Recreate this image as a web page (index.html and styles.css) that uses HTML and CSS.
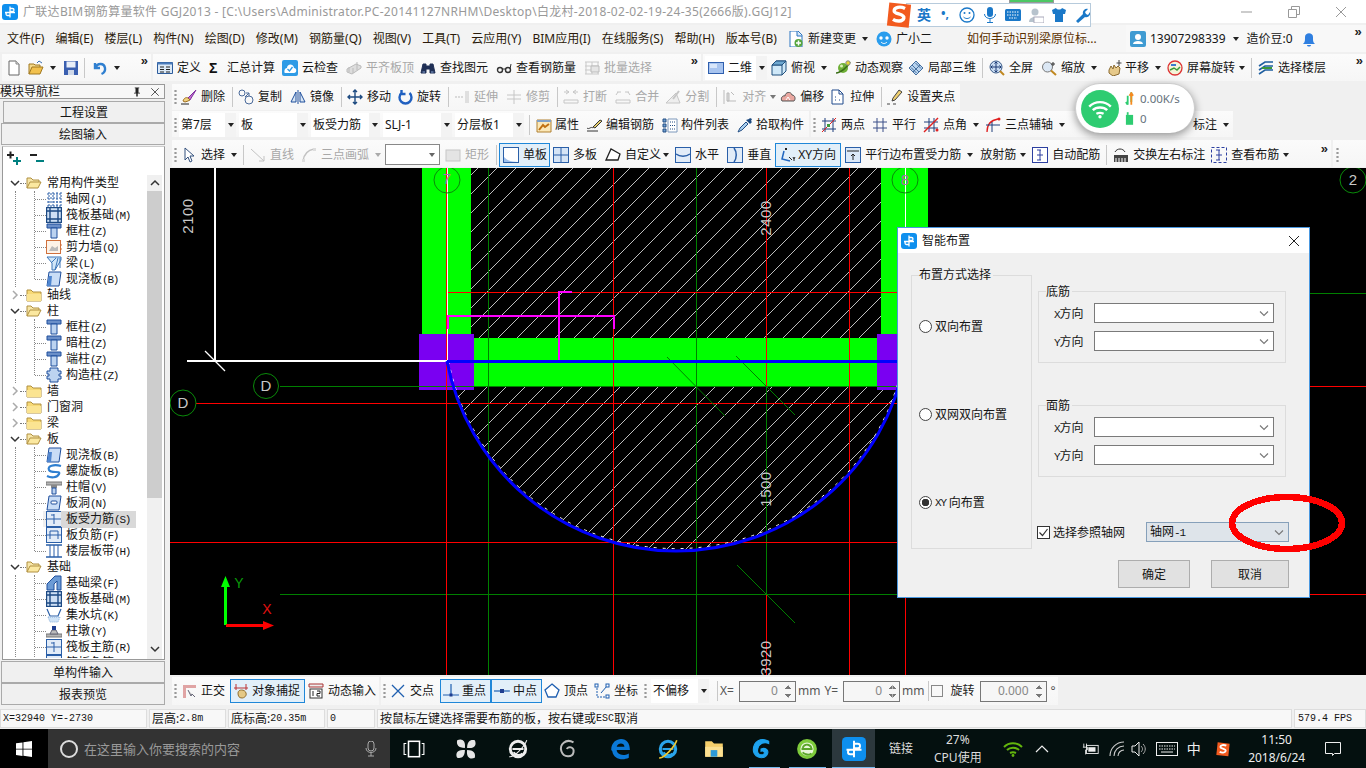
FILE: index.html
```html
<!DOCTYPE html>
<html lang="zh">
<head>
<meta charset="utf-8">
<title>广联达BIM钢筋算量软件</title>
<link rel="stylesheet" href="styles.css">
</head>
<body>
<svg class="defs" aria-hidden="true">
<defs>
<symbol id="app" viewBox="0 0 16 16"><rect width="16" height="16" rx="3" fill="#0e8fee"/><path d="M8 2.500v11M3 8.500h10M8 4.500h2.500a1.500 1.500 0 0 1 0 3H8M8 8.500H5.500a1.500 1.500 0 0 0 0 3H8" fill="none" stroke="#fff" stroke-width="1.300"/></symbol>
<symbol id="doc" viewBox="0 0 16 16"><path d="M3 1h7l3 3v11H3z" fill="#fff" stroke="#666"/><path d="M10 1v3h3" fill="#ddd" stroke="#888"/></symbol>
<symbol id="open" viewBox="0 0 16 16"><path d="M1 14V4h5l1 1h5v2" fill="#f5d98a" stroke="#a07820"/><path d="M1 14l3-7h11l-3 7z" fill="#f2c14e" stroke="#a07820"/><path d="M9 3l2-2 3 2" fill="none" stroke="#3a6fb0"/></symbol>
<symbol id="save" viewBox="0 0 16 16"><path d="M1 1h14v14H1z" fill="#3a5fb0"/><path d="M3.500 1.500h9v6h-9z" fill="#e8eef8"/><path d="M5 10h6v5H5z" fill="#cfd8e8"/></symbol>
<symbol id="undo" viewBox="0 0 16 16"><path d="M3 3v5h5M3.500 8C5 3 12 2.500 13 8c.4 2.500-1 5-3.500 6" fill="none" stroke="#2f7fd0" stroke-width="2.400"/></symbol>
<symbol id="def" viewBox="0 0 16 16"><path d="M.5 2.500h15v11H.5z" fill="#dbe9f7" stroke="#2d5c9c"/><path d="M.5 2.500h15v2H.5z" fill="#4c7dbc"/><path d="M3 7h4M3 9.500h4M3 12h4M9 7h4M9 9.500h4M9 12h4" stroke="#222"/></symbol>
<symbol id="cloud" viewBox="0 0 16 16"><rect width="16" height="16" rx="2" fill="#2e9be6"/><path d="M3 13h9c3 0 3-5 0-5C11 3 5 4 5 8c-3 0-3 5-2 5z" fill="#fff"/><path d="M5.500 9l2 2 3-4" fill="none" stroke="#2e9be6" stroke-width="1.300"/></symbol>
<symbol id="flat" viewBox="0 0 16 16"><path d="M1 9l9-5 5 2v2l-9 6-5-2z" fill="#ddd" stroke="#bbb"/><path d="M3 12V7M7 13V8M11 10V2" stroke="#bbb"/></symbol>
<symbol id="bino" viewBox="0 0 16 16"><path d="M1 13l2-9h3v9zM15 13l-2-9h-3v9zM6 6h4v3H6z" fill="#1f2f55" stroke="#1f2f55"/><path d="M2.500 12h2.500M11 12h2.500" stroke="#8aa8d8"/></symbol>
<symbol id="glass" viewBox="0 0 16 16"><circle cx="4" cy="10" r="2.500" fill="none" stroke="#333" stroke-width="1.400"/><circle cx="12" cy="10" r="2.500" fill="none" stroke="#333" stroke-width="1.400"/><path d="M6 9h4M14 9l1-5" stroke="#333"/></symbol>
<symbol id="batch" viewBox="0 0 16 16"><path d="M1 2h14M1 6h14M1 10h14M1 14h14M2 2v12M8 2v12M14 2v12" stroke="#c9c9c9" fill="none"/><path d="M7 6h8v6H7z" fill="#e5e5e5" stroke="#bbb"/></symbol>
<symbol id="rect2d" viewBox="0 0 16 16"><rect x=".5" y="2.500" width="15" height="11" fill="#a8c4ef" stroke="#2f5fae"/><rect x="2" y="4" width="7" height="4" fill="#d8e6fa"/></symbol>
<symbol id="cube" viewBox="0 0 16 16"><path d="M1 5h10v10H1zM1 5l4-4h10v10l-4 4M11 5l4-4" fill="#cfe8f8" stroke="#1f4f7c"/><path d="M1 5l4-4h10l-4 4z" fill="#6fa8d0" stroke="#1f4f7c"/></symbol>
<symbol id="orbit" viewBox="0 0 16 16"><circle cx="8" cy="8" r="5" fill="#6fb038"/><path d="M1 13C5 13 13 7 15 2" fill="none" stroke="#3b6f18" stroke-width="1.600"/><circle cx="13" cy="3" r="2.200" fill="#e8d830" stroke="#888"/><circle cx="6.500" cy="6" r="1.500" fill="#dcefb8"/></symbol>
<symbol id="local" viewBox="0 0 16 16"><path d="M1 8l7-7 7 7-7 7z" fill="#b9d4ef" stroke="#456f9f"/><path d="M4 5l7 7M12 5L5 12M7.500 3L13 8.500M3 7.500L8.500 13" stroke="#456f9f" fill="none"/></symbol>
<symbol id="fit" viewBox="0 0 16 16"><circle cx="7" cy="7" r="6" fill="#c9dcf2" stroke="#3a5a88"/><path d="M7 2v10M2 7h10M5.500 3.500L7 2l1.500 1.500M5.500 10.500L7 12l1.500-1.500M3.500 5.500L2 7l1.500 1.500M10.500 5.500L12 7l-1.500 1.500" fill="none" stroke="#1d3b75"/><path d="M11 11l4 4" stroke="#c08820" stroke-width="2"/></symbol>
<symbol id="zoom" viewBox="0 0 16 16"><circle cx="6.500" cy="7" r="5" fill="#dbe7f4" stroke="#777"/><path d="M10 10.500l5 4.500" stroke="#c08820" stroke-width="2"/><path d="M12 2v4M10 4h4" stroke="#333"/></symbol>
<symbol id="pan" viewBox="0 0 16 16"><path d="M2 10l2-4 2 3 1-4 2 3 2-2 2 2-1 6-6 2-4-3z" fill="#e6c98a" stroke="#8a6a30"/><path d="M12 0v6M9.500 3h5" stroke="#444"/></symbol>
<symbol id="srot" viewBox="0 0 16 16"><circle cx="8" cy="8" r="7" fill="#f4f4d8" stroke="#d33" stroke-width="1.300"/><path d="M3 10l4-2 3 2 3-3" stroke="#3a9a3a" stroke-width="1.500" fill="none"/><path d="M4 5h5" stroke="#3a7ad0" stroke-width="2"/></symbol>
<symbol id="layer" viewBox="0 0 16 16"><path d="M1 6l6-4h8M1 10l6-4h8M1 14l6-4h8" fill="none" stroke="#1f5fa0" stroke-width="1.600"/><path d="M4 8h10" stroke="#3a9a3a" stroke-width="2"/></symbol>
<symbol id="del" viewBox="0 0 16 16"><path d="M15 1L7 9l2 2z" fill="#c070d0" stroke="#8030a0"/><path d="M7 9c-2-1-4 0-5 3l2 1 3-1 2-1z" fill="#f0d080" stroke="#a07020"/><path d="M0 15h8" stroke="#222"/></symbol>
<symbol id="copy" viewBox="0 0 16 16"><circle cx="4" cy="4" r="3" fill="none" stroke="#4a6a9a"/><circle cx="11" cy="11" r="4" fill="none" stroke="#4a6a9a"/><path d="M7 8l4-4M8 4h3v3" fill="none" stroke="#4a6a9a"/></symbol>
<symbol id="mirror" viewBox="0 0 16 16"><path d="M6 3v10H1zM10 3v10h5z" fill="#dbe7f4" stroke="#1f4f9c"/><path d="M8 1v14" stroke="#1f4f9c"/></symbol>
<symbol id="move" viewBox="0 0 16 16"><path d="M8 1v14M1 8h14M6 3l2-2 2 2M6 13l2 2 2-2M3 6L1 8l2 2M13 6l2 2-2 2" fill="none" stroke="#1d4a80" stroke-width="1.400"/></symbol>
<symbol id="rotate" viewBox="0 0 16 16"><path d="M12.500 4a6 6 0 1 1-8 0M4.500 1v4h4" fill="none" stroke="#2060c0" stroke-width="2.400"/></symbol>
<symbol id="extend" viewBox="0 0 16 16"><path d="M1 8h9" stroke="#bbb" stroke-dasharray="2 1"/><path d="M12 2v12M14 2v12" stroke="#c6c6c6"/></symbol>
<symbol id="trim" viewBox="0 0 16 16"><path d="M1 6h14M1 10h14M8 1v14" stroke="#c6c6c6"/></symbol>
<symbol id="brk" viewBox="0 0 16 16"><path d="M1 3h5M10 3h5M3 1l3 2-3 2M13 1l-3 2 3 2M1 11h14v3H1z" fill="none" stroke="#c6c6c6"/></symbol>
<symbol id="merge" viewBox="0 0 16 16"><path d="M2 3h4M10 3h4M1 6l2-3M15 6l-2-3M1 11h14v3H1z" fill="none" stroke="#c6c6c6"/></symbol>
<symbol id="split" viewBox="0 0 16 16"><path d="M1 14h14L11 4 1 14z" fill="#eee" stroke="#c6c6c6"/><path d="M8 10l6-8" stroke="#c6c6c6" stroke-width="2"/></symbol>
<symbol id="align" viewBox="0 0 16 16"><path d="M2 1v14M5 12h9M5 4h2v8H5z" fill="#ddd" stroke="#bbb"/><path d="M9 3l3 3" stroke="#bbb"/></symbol>
<symbol id="offs" viewBox="0 0 16 16"><path d="M2 12c-2-3 1-6 3-5 0-4 6-5 7-1 3 0 4 4 2 6z" fill="#e9a7a0" stroke="#555"/><path d="M6 11l2-3 2 3" fill="none" stroke="#fff"/></symbol>
<symbol id="strch" viewBox="0 0 16 16"><path d="M2 1h7l4 4v10H2z" fill="#fff" stroke="#214a8c"/><path d="M9 1v4h4" fill="none" stroke="#214a8c"/><path d="M5 8h1M5 11h1M9 11h1" stroke="#214a8c"/></symbol>
<symbol id="grip" viewBox="0 0 16 16"><path d="M0 15h3M6 15h3M12 1L6 9l-1 3 3-1 7-8z" fill="#f0d070" stroke="#444"/></symbol>
<symbol id="prop" viewBox="0 0 16 16"><path d="M1 3h14v12H1z" fill="#fbe8b8" stroke="#b08030"/><path d="M1 3h14v2H1z" fill="#7fa0c8"/><path d="M3 13l4-5 2 2 4-3" stroke="#c07010" fill="none" stroke-width="2"/></symbol>
<symbol id="edit" viewBox="0 0 16 16"><path d="M6 10l7-7 2 1-7 7z" fill="#e8d070" stroke="#333"/><path d="M0 11c2 2 4-2 6 0M0 14h11" fill="none" stroke="#333"/></symbol>
<symbol id="list" viewBox="0 0 16 16"><path d="M1 2h3v3H1zM1 7h3v3H1zM1 12h3v3H1z" fill="#6f9fd0" stroke="#244e84"/><path d="M6 2h9v13H6z" fill="#fff" stroke="#7d98bb"/><path d="M8 5h5M8 8.500h5M8 12h5" stroke="#244e84" stroke-dasharray="1 1"/></symbol>
<symbol id="pick" viewBox="0 0 16 16"><path d="M1 15l2-4 6-6 2 2-6 6z" fill="#a9d0f0" stroke="#244e84"/><path d="M9 3l4 4 2-2-1-1 1-2-2-1-1 1z" fill="#1d4a80"/></symbol>
<symbol id="two" viewBox="0 0 16 16"><path d="M1 4h14M1 12h14M4 1v14M12 1v14" stroke="#1f3f7c"/><path d="M1 15L15 1" stroke="#e02020"/><rect x="6" y="7" width="3" height="3" fill="#3a9a3a"/></symbol>
<symbol id="par" viewBox="0 0 16 16"><path d="M1 5h14M1 11h14M5 1v14M11 1v14" stroke="#3a4f88"/></symbol>
<symbol id="ang" viewBox="0 0 16 16"><path d="M1 5h14M1 11h14M6 1v14M11 1v14" stroke="#1f3f7c"/><path d="M1 15L15 1" stroke="#e02020" stroke-width="1.400"/><circle cx="14" cy="13" r="1.500" fill="#e02020"/></symbol>
<symbol id="arc3" viewBox="0 0 16 16"><path d="M2 15C2 7 7 3 13 2" fill="none" stroke="#e02020" stroke-width="1.300"/><path d="M1 8h14M7 5v10" stroke="#1f3f7c"/><circle cx="14" cy="2" r="1.500" fill="#e02020"/></symbol>
<symbol id="sel" viewBox="0 0 16 16"><path d="M4 1v12l3-3 2 5 2-1-2-5h4z" fill="#fff" stroke="#33507c"/></symbol>
<symbol id="lineg" viewBox="0 0 16 16"><path d="M1 2l13 12M14 9v5H9" fill="none" stroke="#c2c2c2"/></symbol>
<symbol id="arcg" viewBox="0 0 16 16"><path d="M2 14C3 7 7 3 13 2" fill="none" stroke="#c2c2c2" stroke-width="1.400"/><rect x="1" y="12" width="3" height="3" fill="#ddd"/><rect x="12" y="1" width="3" height="3" fill="#ddd"/></symbol>
<symbol id="rectg" viewBox="0 0 16 16"><rect x="1" y="3" width="14" height="11" fill="#e4e4e4" stroke="#c6c6c6"/></symbol>
<symbol id="single" viewBox="0 0 16 16"><rect x=".5" y=".5" width="15" height="15" fill="#fff" stroke="#2a5fa8"/><path d="M1 15V10c4 4 8 5 14 5z" fill="#9fc0ec"/></symbol>
<symbol id="multi" viewBox="0 0 16 16"><rect x=".5" y=".5" width="15" height="15" fill="#d5e4f6" stroke="#2a5fa8"/><path d="M8 0v16M0 8h16" stroke="#2a5fa8"/></symbol>
<symbol id="cust" viewBox="0 0 16 16"><path d="M1 13L6 2l9 5-2 6z" fill="#fff" stroke="#222" stroke-width="1.300"/></symbol>
<symbol id="hor" viewBox="0 0 16 16"><rect x=".5" y=".5" width="15" height="15" fill="#e2ecf8" stroke="#2a5fa8"/><path d="M1 7c4 3 10 3 14 0" fill="none" stroke="#2a5fa8" stroke-width="1.500"/></symbol>
<symbol id="ver" viewBox="0 0 16 16"><rect x=".5" y=".5" width="15" height="15" fill="#e2ecf8" stroke="#2a5fa8"/><path d="M7 1c3 4 3 10 0 14" fill="none" stroke="#2a5fa8" stroke-width="1.500"/></symbol>
<symbol id="xy" viewBox="0 0 16 16"><path d="M4 4l-2 8 8 2" fill="none" stroke="#1f66c0" stroke-width="1.500"/><path d="M9 10l3 3M5 1l2 2M7 1L5 3M13 10l1 2 1-2M14 12v2" stroke="#222" fill="none"/></symbol>
<symbol id="parl" viewBox="0 0 16 16"><rect x=".5" y=".5" width="15" height="15" fill="#dce9f8" stroke="#2a5fa8"/><path d="M2 4h12M8 7v6M6 9l2-2 2 2" stroke="#222" fill="none"/></symbol>
<symbol id="auto" viewBox="0 0 16 16"><rect x=".5" y=".5" width="15" height="15" fill="#fff" stroke="#2c3fa0"/><path d="M5 3h4M8 3v10M5 13h4M5 8h6" stroke="#2c3fa0"/></symbol>
<symbol id="swap" viewBox="0 0 16 16"><path d="M1 8h14v7H1z" fill="#444"/><path d="M3 11v4M6 11v4M9 11v4M12 11v4" stroke="#fff"/><path d="M2 5c2-4 8-4 10 0" fill="none" stroke="#333"/></symbol>
<symbol id="view" viewBox="0 0 16 16"><rect x=".5" y=".5" width="15" height="15" fill="none" stroke="#2c3fa0" stroke-dasharray="3 2"/><path d="M5 3h4M8 3v10M5 13h4M5 8h6" stroke="#2c3fa0"/></symbol>
<symbol id="ortho" viewBox="0 0 16 16"><path d="M2 15V2h13v3H5v10z" fill="#e0a4a4"/><path d="M7 7l3 6 1-2 3 3" fill="#ccc" stroke="#667"/></symbol>
<symbol id="snap" viewBox="0 0 16 16"><path d="M3 1v6M13 1v6M1 5h14" stroke="#b33" fill="none"/><path d="M5 10c0-4 7-4 8 0 1 3-2 5-4 5-3 0-4-2-4-5z" fill="#e5c985" stroke="#927030"/></symbol>
<symbol id="dyn" viewBox="0 0 16 16"><path d="M1 1h14v3H1z" fill="#eee" stroke="#a33"/><rect x="2" y="6" width="12" height="9" fill="#fff" stroke="#333"/><path d="M5 8v5M9 8h3v2.500H9V13h3" stroke="#222" fill="none"/></symbol>
<symbol id="cross" viewBox="0 0 16 16"><path d="M2 2l12 12M14 2L2 14" stroke="#1f5fb0" stroke-width="1.300"/></symbol>
<symbol id="perp" viewBox="0 0 16 16"><path d="M8 1v11M0 12h16" stroke="#1f5fb0" stroke-width="1.200"/><rect x="6.500" y="10.500" width="3" height="3" fill="#1f3f90"/></symbol>
<symbol id="mid" viewBox="0 0 16 16"><path d="M0 8h16" stroke="#1f5fb0" stroke-width="1.200"/><rect x="6" y="6" width="4" height="4" fill="#1f3f90"/></symbol>
<symbol id="vert" viewBox="0 0 16 16"><path d="M8 1l7 6-3 7H4L1 7z" fill="#fff" stroke="#1f5fb0" stroke-width="1.300"/></symbol>
<symbol id="coord" viewBox="0 0 16 16"><path d="M3 2v12h10" fill="none" stroke="#1f5fb0" stroke-dasharray="2 1"/><path d="M13 3L7 10" stroke="#1f5fb0"/><rect x="1" y="1" width="3" height="3" fill="#fff" stroke="#1f5fb0"/><rect x="12" y="1" width="3" height="3" fill="#fff" stroke="#1f5fb0"/><rect x="12" y="12" width="3" height="3" fill="#fff" stroke="#1f5fb0"/></symbol>
<symbol id="newchg" viewBox="0 0 16 16"><path d="M2 0h8l4 4v12H2z" fill="#fff" stroke="#2a74c0"/><path d="M9 0v5h5" fill="#cfe3f7" stroke="#2a74c0"/><circle cx="10.500" cy="12" r="4" fill="#55a53c"/><path d="M10.500 9.500v5M8 12h5" stroke="#fff" stroke-width="1.500"/></symbol>
<symbol id="xiao" viewBox="0 0 16 16"><circle cx="8" cy="8" r="7.500" fill="#2a9ded"/><circle cx="5" cy="7" r="1.700" fill="#fff"/><circle cx="11" cy="7" r="1.700" fill="#fff"/><path d="M5 11c2 2 4 2 6 0" stroke="#fff" fill="none"/></symbol>
<symbol id="user" viewBox="0 0 16 16"><rect width="16" height="16" rx="2" fill="#3f9bd2"/><circle cx="8" cy="6" r="3" fill="#fff"/><path d="M3 13c0-4 10-4 10 0z" fill="#fff"/></symbol>
<symbol id="bell" viewBox="0 0 16 16"><path d="M2 13c2-2 2-3 2-7 0-5 8-5 8 0 0 4 0 5 2 7z" fill="#2f7fe0"/><path d="M6 14c0 2 4 2 4 0z" fill="#2f7fe0"/></symbol>
<symbol id="pin" viewBox="0 0 16 16"><path d="M5 2h6v1h-1v6h2v1H9v4H7v-4H4V9h2V3H5z" fill="#222"/></symbol>
<symbol id="x" viewBox="0 0 16 16"><path d="M3 3l10 10M13 3L3 13" stroke="#222" fill="none"/></symbol>
<symbol id="pp" viewBox="0 0 16 16"><path d="M1 5h7M4.500 1.500v7" stroke="#222" stroke-width="2"/><path d="M7 11h8M11 7v8" stroke="#008080" stroke-width="2"/></symbol>
<symbol id="mm" viewBox="0 0 16 16"><path d="M1 5h7" stroke="#222" stroke-width="2"/><path d="M7 11h8" stroke="#008080" stroke-width="2"/></symbol>
<symbol id="down" viewBox="0 0 10 10"><path d="M1 3l4 4 4-4" fill="none" stroke="#333" stroke-width="1.500"/></symbol>
<symbol id="dropc" viewBox="0 0 10 10"><path d="M1 3.500l4 4 4-4" fill="none" stroke="#777" stroke-width="1.100"/></symbol>
<symbol id="right" viewBox="0 0 10 10"><path d="M3 1l4 4-4 4" fill="none" stroke="#aaa" stroke-width="1.500"/></symbol>
<symbol id="up" viewBox="0 0 10 10"><path d="M1 7l4-4 4 4" fill="none" stroke="#333" stroke-width="1.500"/></symbol>
<symbol id="fo" viewBox="0 0 16 16"><path d="M1 13V3h4l2 2h6v3" fill="#f7e6a8" stroke="#b09040"/><path d="M1 13l3-6h11l-3 6z" fill="#fbe8a0" stroke="#b09040"/></symbol>
<symbol id="fc" viewBox="0 0 16 16"><path d="M1 14V3h4l2 2h8v9z" fill="#f7d976" stroke="#b09040"/><path d="M1 7h14v7H1z" fill="#fbe492"/></symbol>
<symbol id="tgrid" viewBox="0 0 16 16"><path d="M1 3h14M1 7h14M1 11h14M1 15h14M3 1v14M7 1v14M11 1v14M15 1v14" stroke="#2a5fa8" stroke-dasharray="2 1"/></symbol>
<symbol id="traft" viewBox="0 0 16 16"><rect x=".5" y=".5" width="15" height="15" fill="#cfe0f5" stroke="#1d4a84" stroke-width="1.400"/><path d="M4 1v14M12 1v14M1 4h14M1 12h14" stroke="#1d4a84" stroke-width="1.400"/></symbol>
<symbol id="tcol" viewBox="0 0 16 16"><path d="M1 1h14v4H1z" fill="#6b8fc8" stroke="#1f4f9c"/><path d="M5 5h6v10H5z" fill="#bcd3f0" stroke="#1f4f9c"/></symbol>
<symbol id="tpuz" viewBox="0 0 16 16"><path d="M4 1h8v3h3v3h-2v2h2v3h-3v3H4v-3H1v-3h2V7H1V4h3z" fill="#bcd3f0" stroke="#1f4f9c"/></symbol>
<symbol id="twall" viewBox="0 0 16 16"><rect x=".5" y="1.500" width="14" height="13" fill="#fdf3e8" stroke="#d0703c"/><path d="M3 12l3-5 3 2 3-2v5z" fill="#bbb"/><path d="M15 5v2M15 9v2" stroke="#d0703c"/></symbol>
<symbol id="tbeam" viewBox="0 0 16 16"><path d="M1 2h14v3L9 15H6V8z" fill="#d0e6f8" stroke="#3c76b8"/><path d="M10 3l-5 5M12 3l-3 12M14 3v10" stroke="#3c76b8"/></symbol>
<symbol id="tslab" viewBox="0 0 16 16"><path d="M3 1h12l-2 14H1z" fill="#c9ddf6" stroke="#1f4f9c"/><path d="M1 15l2-10h3l-1 10z" fill="#4f86d0"/></symbol>
<symbol id="tspiral" viewBox="0 0 16 16"><path d="M15 3C8 1 1 3 3 7s12 0 10 4-8 4-12 2" fill="none" stroke="#2f7fd0" stroke-width="2.200"/></symbol>
<symbol id="tcap" viewBox="0 0 16 16"><path d="M0 3h16v3H0z" fill="#b5b5b5" stroke="#777"/><path d="M5 6h6v3H5z" fill="#888"/><path d="M6 9h4v6H6z" fill="#bcd3f0" stroke="#1f4f9c"/></symbol>
<symbol id="thole" viewBox="0 0 16 16"><path d="M3 1h12l-2 14H1z" fill="#c9ddf6" stroke="#1f4f9c"/><rect x="5" y="6" width="6" height="3" rx="1" fill="#fff" stroke="#1f4f9c"/></symbol>
<symbol id="trebar" viewBox="0 0 16 16"><rect x=".5" y=".5" width="15" height="15" fill="#e2ecf8" stroke="#2a5fa8"/><path d="M1 8h14M8 3v10M5 4h3" stroke="#2a5fa8"/></symbol>
<symbol id="tneg" viewBox="0 0 16 16"><rect x=".5" y=".5" width="15" height="15" fill="#e2ecf8" stroke="#2a5fa8"/><path d="M1 8h14M4 4v8M12 4v8M4 4h8" stroke="#2a5fa8" fill="none"/></symbol>
<symbol id="tband" viewBox="0 0 16 16"><path d="M0 2h16M0 14h16" stroke="#2a5fa8" stroke-width="1.400"/><path d="M4 2v12M12 2v12M8 2v12" stroke="#2a5fa8"/></symbol>
<symbol id="tbb" viewBox="0 0 16 16"><path d="M1 15V9l8-8h6v14h-4V6l-3 3v6z" fill="#6c9bd5" stroke="#1f4f9c"/></symbol>
<symbol id="tpit" viewBox="0 0 16 16"><path d="M1 2l3 7h8l3-7" fill="none" stroke="#2a5fa8" stroke-width="1.200"/><path d="M2 10h12l-2 5H4z" fill="#cfe3f7" stroke="#8ab0da" stroke-dasharray="1 1"/></symbol>
<symbol id="tpier" viewBox="0 0 16 16"><path d="M0 11h16v3H0z" fill="#b5b5b5" stroke="#777"/><path d="M4 11l2-4h4l2 4z" fill="#bbb" stroke="#667"/><path d="M6 3h4v4H6z" fill="#1f3f90"/></symbol>
<symbol id="twin" viewBox="0 0 16 16"><path d="M0 2.300l6.500-.9v6.300H0zM7.400 1.300L16 0v7.700H7.400zM0 8.600h6.500v6.300L0 14zM7.400 8.600H16V16l-8.600-1.200z" fill="#fff"/></symbol>
<symbol id="tmic" viewBox="0 0 16 16"><rect x="5" y="0" width="6" height="10" rx="3" fill="none" stroke="#aaa"/><path d="M3 7c0 6 10 6 10 0M8 12v3M5 15h6" fill="none" stroke="#aaa"/></symbol>
<symbol id="tview" viewBox="0 0 20 16"><rect x="5" y="1" width="10" height="14" fill="none" stroke="#fff" stroke-width="1.400"/><path d="M3 3H1v10h2M17 3h2v10h-2" fill="none" stroke="#fff"/></symbol>
<symbol id="fan" viewBox="0 0 20 20"><path d="M9 9C3 9 1 6 2 2c4-2 8 0 7 7zM11 9c0-6 3-8 7-7 2 4 0 8-7 7zM11 11c6 0 8 3 7 7-4 2-8 0-7-7zM9 11c0 6-3 8-7 7-2-4 0-8 7-7z" fill="#e6e6e6"/></symbol>
<symbol id="ieg" viewBox="0 0 20 20"><circle cx="10" cy="10" r="7" fill="none" stroke="#eee" stroke-width="2.600"/><path d="M5 10h10M6 13c2 3 6 3 8 1" stroke="#eee" stroke-width="1.800" fill="none"/><path d="M2 17C6 18 16 8 18 2" stroke="#eee" fill="none"/></symbol>
<symbol id="swirl" viewBox="0 0 20 20"><path d="M15 4C8 0 2 6 4 12s10 6 11 1-5-6-6-3" fill="none" stroke="#bbb" stroke-width="1.800"/></symbol>
<symbol id="edge" viewBox="0 0 20 20"><path d="M2 11C2 4 7 1 11 1c5 0 8 4 8 10H7c0 4 6 6 11 3v4c-6 3-14 1-15-6zm5-3h7c0-4-6-4-7 0z" fill="#0a78d7"/></symbol>
<symbol id="iec" viewBox="0 0 20 20"><circle cx="10" cy="10" r="7" fill="none" stroke="#2aa4ea" stroke-width="2.800"/><path d="M5 10h10M6 13c2 3 6 3 8 1" stroke="#2aa4ea" stroke-width="1.800" fill="none"/><path d="M2 18C6 19 16 8 18 2" stroke="#f0c830" stroke-width="1.500" fill="none"/></symbol>
<symbol id="folder" viewBox="0 0 20 20"><path d="M2 3h6l2 2h8v12H2z" fill="#f6cf6b"/><path d="M2 8h16v9H2z" fill="#fde191"/><rect x="7" y="11" width="6" height="6" fill="#2c9ad8"/></symbol>
<symbol id="gg" viewBox="0 0 20 20"><path d="M17 3C10-1 3 3 3 11c0 6 8 9 12 5 3-4 0-8-5-6v2c3-1 4 2 2 3-3 1-6-1-5-5 1-5 6-7 10-5z" fill="#1ea3ef" stroke="#1ea3ef"/></symbol>
<symbol id="gie" viewBox="0 0 20 20"><circle cx="10" cy="10" r="9" fill="#7ecb3b"/><circle cx="10" cy="10" r="6" fill="#e8f6d8"/><path d="M5 10h10M6 13c2 2 6 3 8 1M14 10c0-4-6-6-8-1" stroke="#5aa528" stroke-width="1.700" fill="none"/></symbol>
<symbol id="wifi" viewBox="0 0 20 16"><path d="M1 6c5-5 13-5 18 0M4 9c3-3 9-3 12 0M7 12c2-1 4-1 6 0" fill="none" stroke="currentColor" stroke-width="2"/><circle cx="10" cy="14.500" r="1.400" fill="currentColor"/></symbol>
<symbol id="chev" viewBox="0 0 14 14"><path d="M1 10l6-6 6 6" fill="none" stroke="#eee" stroke-width="1.200"/></symbol>
<symbol id="batt" viewBox="0 0 20 16"><rect x="5" y="4" width="13" height="9" fill="none" stroke="#eee"/><rect x="7" y="6" width="8" height="5" fill="#eee"/><path d="M2 2v4M5 2v4M1 6h5v3H4v5" stroke="#eee" fill="none"/></symbol>
<symbol id="wifig" viewBox="0 0 16 16"><path d="M1 15A14 14 0 0 1 15 1M5 15A10 10 0 0 1 15 5M9 15a6 6 0 0 1 6-6" fill="none" stroke="#ccc" stroke-width="1.100"/></symbol>
<symbol id="spk" viewBox="0 0 16 16"><path d="M1 5h3l4-4v14l-4-4H1z" fill="none" stroke="#eee"/><path d="M10 5c2 2 2 4 0 6M12 3c3 3 3 7 0 10" fill="none" stroke="#aaa"/></symbol>
<symbol id="kbd" viewBox="0 0 22 16"><rect x=".5" y="1.500" width="21" height="13" fill="none" stroke="#eee"/><path d="M3 5h16M3 8h16" stroke="#eee" stroke-dasharray="1.500 1"/><path d="M5 11h12" stroke="#eee"/></symbol>
<symbol id="slogo" viewBox="0 0 24 24"><path d="M4 2l18 2-2 19-18-2z" fill="#f25a1e"/><path d="M17 7c-4-2-9-1-9 2s9 2 8 6c-1 3-6 3-9 1" fill="none" stroke="#fff" stroke-width="2.800"/></symbol>
<symbol id="note" viewBox="0 0 16 16"><path d="M.5 1.500h15v11H9.500l-2 2v-2H.5z" fill="none" stroke="#eee"/></symbol>
</defs>
</svg>

<header class="titlebar">
  <svg class="i logo"><use href="#app"/></svg>
  <span class="title">广联达BIM钢筋算量软件 GGJ2013 - [C:\Users\Administrator.PC-20141127NRHM\Desktop\白龙村-2018-02-02-19-24-35(2666版).GGJ12]</span>
  <div class="winbtns">
    <svg class="wb" viewBox="0 0 12 12"><path d="M0 6h11" stroke="#999"/></svg>
    <svg class="wb" viewBox="0 0 12 12"><path d="M.5 3.500h8v8h-8zM3.500 3V.5h8v8H9" fill="none" stroke="#999"/></svg>
    <svg class="wb" viewBox="0 0 12 12"><path d="M1 1l10 10M11 1L1 11" stroke="#999" fill="none"/></svg>
  </div>
</header>

<nav class="menubar">
  <div class="menu">
    <span class="mi">文件(F)</span><span class="mi">编辑(E)</span><span class="mi">楼层(L)</span><span class="mi">构件(N)</span><span class="mi">绘图(D)</span><span class="mi">修改(M)</span><span class="mi">钢筋量(Q)</span><span class="mi">视图(V)</span><span class="mi">工具(T)</span><span class="mi">云应用(Y)</span><span class="mi">BIM应用(I)</span><span class="mi">在线服务(S)</span><span class="mi">帮助(H)</span><span class="mi">版本号(B)</span>
    <span class="t"><svg class="i"><use href="#newchg"/></svg><span>新建变更</span><i class="c"></i></span>
    <span class="t"><svg class="i"><use href="#xiao"/></svg><span>广小二</span></span>
    <span class="news">如何手动识别梁原位标...</span>
  </div>
  <div class="acct">
    <svg class="i"><use href="#user"/></svg><span class="phone">13907298339</span><i class="c"></i><span class="bean">造价豆:0</span><svg class="i bell"><use href="#bell"/></svg><span class="more">»</span>
  </div>
</nav>

<section class="row r1">
  <div class="grp g11">
    <svg class="i"><use href="#doc"/></svg>
    <svg class="i ml6"><use href="#open"/></svg><i class="c ml6"></i>
    <svg class="i ml7"><use href="#save"/></svg>
    <i class="sep s5"></i>
    <svg class="i"><use href="#undo"/></svg><i class="c ml6"></i>
    <span class="more mla">»</span>
  </div>
  <div class="grp g12">
    <span class="t"><svg class="i"><use href="#def"/></svg><span>定义</span></span>
    <span class="t m7"><b class="sigma">Σ</b><span>汇总计算</span></span>
    <span class="t"><svg class="i"><use href="#cloud"/></svg><span>云检查</span></span>
    <span class="t dis m6"><svg class="i"><use href="#flat"/></svg><span>平齐板顶</span></span>
    <span class="t"><svg class="i"><use href="#bino"/></svg><span>查找图元</span></span>
    <span class="t"><svg class="i"><use href="#glass"/></svg><span>查看钢筋量</span></span>
    <span class="t dis"><svg class="i"><use href="#batch"/></svg><span>批量选择</span></span>
    <span class="more mla">»</span>
  </div>
  <div class="grp g13">
    <span class="cb cb2d"><svg class="i"><use href="#rect2d"/></svg><span class="cbt">二维</span><span class="cbb"><i class="c"></i></span></span>
    <span class="t"><svg class="i"><use href="#cube"/></svg><span>俯视</span><i class="c"></i></span>
    <span class="t m5"><svg class="i"><use href="#orbit"/></svg><span>动态观察</span></span>
    <span class="t m0"><svg class="i"><use href="#local"/></svg><span>局部三维</span></span>
    <i class="sep"></i>
    <span class="t"><svg class="i"><use href="#fit"/></svg><span>全屏</span></span>
    <span class="t m10"><svg class="i"><use href="#zoom"/></svg><span>缩放</span><i class="c"></i></span>
    <span class="t m6"><svg class="i"><use href="#pan"/></svg><span class="tm">平移</span><i class="c"></i></span>
    <span class="t m0"><svg class="i"><use href="#srot"/></svg><span>屏幕旋转</span><i class="c cn"></i></span>
    <i class="sep"></i>
    <span class="t"><svg class="i"><use href="#layer"/></svg><span>选择楼层</span></span>
    <span class="more mla">»</span>
  </div>
</section>

<div class="main">
  <aside class="side">
    <div class="side-h"><span>模块导航栏</span><svg class="i sm pinx"><use href="#pin"/></svg><svg class="i sm"><use href="#x"/></svg></div>
    <div class="sbtn first">工程设置</div>
    <div class="sbtn">绘图输入</div>
    <div class="pane">
      <div class="pane-tools"><svg class="i"><use href="#pp"/></svg><svg class="i"><use href="#mm"/></svg></div>
      <div class="pane-body">
        <div class="tree">
          <div class="n"><svg class="ch"><use href="#down"/></svg><i class="d"></i><svg class="i"><use href="#fo"/></svg><span class="nt">常用构件类型</span></div>
          <div class="kids"><div class="kl">
            <div class="k"><svg class="i"><use href="#tgrid"/></svg><span>轴网<span class="m">(J)</span></span></div>
            <div class="k"><svg class="i"><use href="#traft"/></svg><span>筏板基础<span class="m">(M)</span></span></div>
            <div class="k"><svg class="i"><use href="#tcol"/></svg><span>框柱<span class="m">(Z)</span></span></div>
            <div class="k"><svg class="i"><use href="#twall"/></svg><span>剪力墙<span class="m">(Q)</span></span></div>
            <div class="k"><svg class="i"><use href="#tbeam"/></svg><span>梁<span class="m">(L)</span></span></div>
            <div class="k"><svg class="i"><use href="#tslab"/></svg><span>现浇板<span class="m">(B)</span></span></div>
          </div></div>
          <div class="n"><svg class="ch"><use href="#right"/></svg><i class="d"></i><svg class="i"><use href="#fc"/></svg><span class="nt">轴线</span></div>
          <div class="n"><svg class="ch"><use href="#down"/></svg><i class="d"></i><svg class="i"><use href="#fo"/></svg><span class="nt">柱</span></div>
          <div class="kids"><div class="kl">
            <div class="k"><svg class="i"><use href="#tcol"/></svg><span>框柱<span class="m">(Z)</span></span></div>
            <div class="k"><svg class="i"><use href="#tcol"/></svg><span>暗柱<span class="m">(Z)</span></span></div>
            <div class="k"><svg class="i"><use href="#tcol"/></svg><span>端柱<span class="m">(Z)</span></span></div>
            <div class="k"><svg class="i"><use href="#tpuz"/></svg><span>构造柱<span class="m">(Z)</span></span></div>
          </div></div>
          <div class="n"><svg class="ch"><use href="#right"/></svg><i class="d"></i><svg class="i"><use href="#fc"/></svg><span class="nt">墙</span></div>
          <div class="n"><svg class="ch"><use href="#right"/></svg><i class="d"></i><svg class="i"><use href="#fc"/></svg><span class="nt">门窗洞</span></div>
          <div class="n"><svg class="ch"><use href="#right"/></svg><i class="d"></i><svg class="i"><use href="#fc"/></svg><span class="nt">梁</span></div>
          <div class="n"><svg class="ch"><use href="#down"/></svg><i class="d"></i><svg class="i"><use href="#fo"/></svg><span class="nt">板</span></div>
          <div class="kids"><div class="kl">
            <div class="k"><svg class="i"><use href="#tslab"/></svg><span>现浇板<span class="m">(B)</span></span></div>
            <div class="k"><svg class="i"><use href="#tspiral"/></svg><span>螺旋板<span class="m">(B)</span></span></div>
            <div class="k"><svg class="i"><use href="#tcap"/></svg><span>柱帽<span class="m">(V)</span></span></div>
            <div class="k"><svg class="i"><use href="#thole"/></svg><span>板洞<span class="m">(N)</span></span></div>
            <div class="k picked"><svg class="i"><use href="#trebar"/></svg><span>板受力筋<span class="m">(S)</span></span></div>
            <div class="k"><svg class="i"><use href="#tneg"/></svg><span>板负筋<span class="m">(F)</span></span></div>
            <div class="k"><svg class="i"><use href="#tband"/></svg><span>楼层板带<span class="m">(H)</span></span></div>
          </div></div>
          <div class="n"><svg class="ch"><use href="#down"/></svg><i class="d"></i><svg class="i"><use href="#fo"/></svg><span class="nt">基础</span></div>
          <div class="kids"><div class="kl">
            <div class="k"><svg class="i"><use href="#tbb"/></svg><span>基础梁<span class="m">(F)</span></span></div>
            <div class="k"><svg class="i"><use href="#traft"/></svg><span>筏板基础<span class="m">(M)</span></span></div>
            <div class="k"><svg class="i"><use href="#tpit"/></svg><span>集水坑<span class="m">(K)</span></span></div>
            <div class="k"><svg class="i"><use href="#tpier"/></svg><span>柱墩<span class="m">(Y)</span></span></div>
            <div class="k"><svg class="i"><use href="#trebar"/></svg><span>筏板主筋<span class="m">(R)</span></span></div>
            <div class="k"><svg class="i"><use href="#tneg"/></svg><span>筏板负筋<span class="m">(X)</span></span></div>
          </div></div>
        </div>
        <div class="sbar"><svg class="sa"><use href="#up"/></svg><div class="thumb"></div><svg class="sa dn"><use href="#down"/></svg></div>
      </div>
    </div>
    <div class="sbtn low">单构件输入</div>
    <div class="sbtn low">报表预览</div>
  </aside>

  <div class="work">
    <section class="row r2">
      <div class="grp g21">
        <i class="gp"></i>
        <span class="t m0"><svg class="i"><use href="#del"/></svg><span>删除</span></span><i class="sep"></i>
        <span class="t"><svg class="i"><use href="#copy"/></svg><span>复制</span></span>
        <span class="t m0"><svg class="i"><use href="#mirror"/></svg><span>镜像</span></span><i class="sep"></i>
        <span class="t m6"><svg class="i"><use href="#move"/></svg><span>移动</span></span>
        <span class="t m0"><svg class="i"><use href="#rotate"/></svg><span>旋转</span></span><i class="sep"></i>
        <span class="t dis"><svg class="i"><use href="#extend"/></svg><span>延伸</span></span>
        <span class="t m0 dis"><svg class="i"><use href="#trim"/></svg><span>修剪</span></span><i class="sep"></i>
        <span class="t dis"><svg class="i"><use href="#brk"/></svg><span>打断</span></span>
        <span class="t m6 dis"><svg class="i"><use href="#merge"/></svg><span>合并</span></span>
        <span class="t m0 dis"><svg class="i"><use href="#split"/></svg><span>分割</span></span><i class="sep"></i>
        <span class="t m4 dis"><svg class="i"><use href="#align"/></svg><span>对齐</span><i class="c cd cn"></i></span>
        <span class="t m6"><svg class="i"><use href="#offs"/></svg><span>偏移</span></span>
        <span class="t m0"><svg class="i"><use href="#strch"/></svg><span>拉伸</span></span><i class="sep"></i>
        <span class="t m0"><svg class="i"><use href="#grip"/></svg><span>设置夹点</span></span>
      </div>
    </section>

    <section class="row r3">
      <div class="grp g31">
        <i class="gp"></i>
        <span class="cb w46"><span class="cbt">第7层</span><span class="cbb"><i class="c"></i></span></span>
        <span class="cb w59"><span class="cbt">板</span><span class="cbb"><i class="c"></i></span></span>
        <span class="cb w58"><span class="cbt">板受力筋</span><span class="cbb"><i class="c"></i></span></span>
        <span class="cb w58"><span class="cbt">SLJ-1</span><span class="cbb"><i class="c"></i></span></span>
        <span class="cb w58 last"><span class="cbt">分层板1</span><span class="cbb"><i class="c"></i></span></span>
        <i class="sep s4"></i>
        <span class="t"><svg class="i"><use href="#prop"/></svg><span>属性</span></span>
        <span class="t"><svg class="i"><use href="#edit"/></svg><span>编辑钢筋</span></span>
        <span class="t"><svg class="i"><use href="#list"/></svg><span>构件列表</span></span>
        <span class="t m0"><svg class="i"><use href="#pick"/></svg><span>拾取构件</span></span>
      </div>
      <div class="grp g32">
        <i class="gp"></i>
        <span class="t m7"><svg class="i"><use href="#two"/></svg><span>两点</span></span>
        <span class="t m7"><svg class="i"><use href="#par"/></svg><span>平行</span></span>
        <span class="t m6"><svg class="i"><use href="#ang"/></svg><span>点角</span><i class="c"></i></span>
        <span class="t"><svg class="i"><use href="#arc3"/></svg><span>三点辅轴</span><i class="c"></i></span>
        <span class="t m0 mla"><span>标注</span><i class="c"></i></span>
      </div>
    </section>

    <section class="row r4">
      <div class="grp g41">
        <i class="gp"></i>
        <span class="t m6"><svg class="i"><use href="#sel"/></svg><span>选择</span><i class="c"></i></span><i class="sep s6"></i>
        <span class="t m7 dis"><svg class="i"><use href="#lineg"/></svg><span>直线</span></span>
        <span class="t m4 dis"><svg class="i"><use href="#arcg"/></svg><span>三点画弧</span><i class="c cg"></i></span>
        <span class="linecb"><i class="c cg2"></i></span>
        <span class="t m0 dis"><svg class="i"><use href="#rectg"/></svg><span>矩形</span></span><i class="sep s3"></i>
        <span class="t act m3"><svg class="i"><use href="#single"/></svg><span>单板</span></span>
        <span class="t"><svg class="i"><use href="#multi"/></svg><span>多板</span></span>
        <span class="t m6"><svg class="i"><use href="#cust"/></svg><span>自定义</span><i class="c cn2"></i></span>
        <span class="t"><svg class="i"><use href="#hor"/></svg><span>水平</span></span>
        <span class="t m4"><svg class="i"><use href="#ver"/></svg><span>垂直</span></span>
        <span class="t act axy m4"><svg class="i"><use href="#xy"/></svg><span>XY方向</span></span>
        <span class="t m7"><svg class="i"><use href="#parl"/></svg><span>平行边布置受力筋</span><i class="c"></i></span>
        <span class="t m6"><span>放射筋</span><i class="c cn"></i></span>
        <span class="t m0"><svg class="i"><use href="#auto"/></svg><span>自动配筋</span></span><i class="sep"></i>
        <span class="t m6"><svg class="i"><use href="#swap"/></svg><span>交换左右标注</span></span>
        <span class="t m0"><svg class="i"><use href="#view"/></svg><span>查看布筋</span><i class="c cn"></i></span>
        <span class="more mla">»</span>
      </div>
      <div class="grp g42"><i class="gp"></i></div>
    </section>

    <div class="cad-wrap">
      <svg class="cad" viewBox="170 168 1196 507">
        <defs>
          <pattern id="hatch" width="19" height="19" patternUnits="userSpaceOnUse"><path d="M0 19L19 0" stroke="#bdbdbd" stroke-width="1" shape-rendering="crispEdges"/></pattern>
          <clipPath id="bowl"><path d="M447 361A233 233 0 0 0 905 361z"/></clipPath>
        </defs>
        <rect x="170" y="168" width="1196" height="507" fill="#000"/>
        <rect x="471" y="168" width="410" height="170" fill="url(#hatch)"/>
        <rect x="447" y="361" width="458" height="190" fill="url(#hatch)" clip-path="url(#bowl)"/>
        <g fill="#0f0">
          <rect x="422" y="168" width="49" height="166"/>
          <rect x="881" y="168" width="47" height="166"/>
          <rect x="474" y="338" width="403" height="48"/>
        </g>
        <g fill="#7a00f2">
          <rect x="419" y="334" width="55" height="56"/>
          <rect x="877" y="334" width="53" height="56"/>
        </g>
        <g stroke="#007f00" fill="none" shape-rendering="crispEdges">
          <path d="M280 386.500H898M488.500 168V675M696.500 168V675M766.500 386V594M280 594.500H898M1310 293.500H1366"/>
        </g>
        <g stroke="#f00" fill="none" shape-rendering="crispEdges">
          <path d="M446.500 168V675M613.500 168V675M849.500 168V675M766.500 168V386M766.500 594V675M447 292.500H898M196 403.500H898M170 542.500H898M1310 386.500H1366M1310 594.500H1366M905.500 597V675"/>
        </g>
        <g stroke="#fff" fill="none" shape-rendering="crispEdges">
          <path d="M447.500 168V361M905.500 168V334"/>
        </g>
        <path d="M215 168V361M187 360.500H447" stroke="#fff" stroke-width="2" shape-rendering="crispEdges"/>
        <path d="M205 351L225 371" stroke="#fff" stroke-width="1.200"/>
        <path d="M447.500 316V329M447 316H613.500V329M558.500 292V360M558 291.500H572" stroke="#f0f" stroke-width="2" fill="none" shape-rendering="crispEdges"/>
        <path d="M667 357L725 416M736 356L795 415M737 565L795 623" stroke="#007f00" fill="none"/>
        <path d="M448.700 361A231.500 231.500 0 0 0 903.300 361" fill="none" stroke="#fff" stroke-width="1" stroke-dasharray="3 6"/>
        <path d="M447 361A233 233 0 0 0 905 361M447 361.500H898" fill="none" stroke="#00f" stroke-width="3"/>
        <g fill="none" stroke="#0a8a0a">
          <circle cx="447" cy="180" r="13"/>
          <circle cx="905" cy="180" r="13"/>
          <circle cx="266" cy="386" r="12.500" fill="#000"/>
          <circle cx="183" cy="403" r="13" fill="#000"/>
          <circle cx="1353" cy="180" r="13"/>
        </g>
        <g class="lbl">
          <text x="266" y="391">D</text>
          <text x="183" y="408">D</text>
          <text x="1353" y="185">2</text>
          <text x="447" y="184" class="lp">7</text>
          <text x="905" y="185" class="lp">8</text>
          <text class="dim" transform="translate(193 216) rotate(-90)">2100</text>
          <text class="dim" transform="translate(771 218) rotate(-90)">2400</text>
          <text class="dim" transform="translate(771 489) rotate(-90)">1500</text>
          <text class="dim" transform="translate(771 658) rotate(-90)">3920</text>
        </g>
        <path d="M225.500 625V584" stroke="#0f0" stroke-width="3"/>
        <path d="M221 587L225.500 576L230 587z" fill="#0f0"/>
        <path d="M226 625.500H265" stroke="#f00" stroke-width="3"/>
        <path d="M263 621L274 625.500L263 630z" fill="#f00"/>
        <text x="239" y="588" class="ax gy">Y</text>
        <text x="267" y="614" class="ax rx">X</text>
      </svg>
    </div>

    <section class="row r5">
      <div class="grp g51">
        <i class="gp"></i>
        <span class="t m5"><svg class="i"><use href="#ortho"/></svg><span>正交</span></span>
        <span class="t act m3"><svg class="i"><use href="#snap"/></svg><span>对象捕捉</span></span>
        <span class="t m0"><svg class="i"><use href="#dyn"/></svg><span>动态输入</span></span>
      </div>
      <div class="grp g52">
        <i class="gp"></i>
        <span class="t m6"><svg class="i"><use href="#cross"/></svg><span>交点</span></span>
        <span class="t act m0"><svg class="i"><use href="#perp"/></svg><span>重点</span></span>
        <span class="t act m2"><svg class="i"><use href="#mid"/></svg><span>中点</span></span>
        <span class="t m6"><svg class="i"><use href="#vert"/></svg><span>顶点</span></span>
        <span class="t m5"><svg class="i"><use href="#coord"/></svg><span>坐标</span></span>
        <i class="gp"></i>
        <span class="cb w47"><span class="cbt">不偏移</span><span class="cbb"><i class="c"></i></span></span>
        <i class="sep s1"></i>
        <span class="lab">X=</span><span class="spin w57"><span>0</span><i class="sb"></i></span><span class="lab ml2">mm</span><span class="lab ml4">Y=</span><span class="spin w57"><span>0</span><i class="sb"></i></span><span class="lab ml2">mm</span>
        <i class="sep s2"></i>
        <i class="chk"></i><span class="lab rot">旋转</span>
        <span class="spin w67"><span>0.000</span><i class="sb"></i></span><span class="lab ml4">°</span>
      </div>
    </section>
  </div>
</div>

<footer class="status">
  <span class="st w147"><span class="mono">X=32940 Y=-2730</span></span>
  <span class="st w77">层高:<span class="mono">2.8m</span></span>
  <span class="st w97">底标高:<span class="mono">20.35m</span></span>
  <span class="st w47n"><span class="mono">0</span></span>
  <span class="st grow">按鼠标左键选择需要布筋的板，按右键或<span class="mono">ESC</span>取消</span>
  <span class="st w72"><span class="mono">579.4 FPS</span></span>
</footer>

<div class="taskbar">
  <div class="tb-win"><svg class="i"><use href="#twin"/></svg></div>
  <div class="tb-search"><i class="cortana"></i><span>在这里输入你要搜索的内容</span><svg class="i mla tbm"><use href="#tmic"/></svg></div>
  <div class="tb-cell c48"><svg class="ti tv"><use href="#tview"/></svg></div>
  <div class="tb-cell c52 first"><svg class="ti"><use href="#fan"/></svg></div>
  <div class="tb-cell c52"><svg class="ti"><use href="#ieg"/></svg></div>
  <div class="tb-cell c48"><svg class="ti"><use href="#swirl"/></svg></div>
  <div class="tb-cell c56"><svg class="ti"><use href="#edge"/></svg></div>
  <div class="tb-cell c40"><svg class="ti"><use href="#iec"/></svg></div>
  <div class="tb-cell c52"><svg class="ti"><use href="#folder"/></svg></div>
  <div class="tb-cell c42 run-g"><svg class="ti"><use href="#gg"/></svg></div>
  <div class="tb-cell c50 run-e"><svg class="ti"><use href="#gie"/></svg></div>
  <div class="tb-cell active"><svg class="ti big"><use href="#app"/></svg></div>
  <span class="tb-link">链接</span>
  <div class="tb-cpu"><span>27%</span><span>CPU使用</span></div>
  <svg class="ti wg"><use href="#wifi"/></svg>
  <svg class="tc ch1"><use href="#chev"/></svg>
  <svg class="tc tb"><use href="#batt"/></svg>
  <svg class="tc tw"><use href="#wifig"/></svg>
  <svg class="tc ts"><use href="#spk"/></svg>
  <svg class="tc tk"><use href="#kbd"/></svg>
  <span class="tb-zh">中</span>
  <svg class="tc sl"><use href="#slogo"/></svg>
  <div class="tb-clock"><span>11:50</span><span>2018/6/24</span></div>
  <svg class="tc tn"><use href="#note"/></svg>
</div>

<div class="ime">
  <i class="ime-green"></i>
  <div class="ime-bar">
    <b>英</b>
    <span class="ime-p">•,</span>
    <svg class="ic" viewBox="0 0 16 16"><circle cx="8" cy="8" r="7" fill="none" stroke="#1a78c8" stroke-width="1.300"/><circle cx="5.500" cy="6" r="1" fill="#1a78c8"/><circle cx="10.500" cy="6" r="1" fill="#1a78c8"/><path d="M4.500 10c2 2 5 2 7 0" stroke="#1a78c8" fill="none"/></svg>
    <svg class="ic" viewBox="0 0 16 16"><rect x="5" y="0" width="6" height="10" rx="3" fill="#1a78c8"/><path d="M2.500 7c0 6 11 6 11 0M8 12v3M5 15.500h6" fill="none" stroke="#1a78c8"/></svg>
    <svg class="ic" viewBox="0 0 16 16"><rect x="0" y="2" width="16" height="12" rx="1.500" fill="#1a78c8"/><path d="M2 5h12M2 8h12M4 11h8" stroke="#fff" stroke-dasharray="1.500 1"/></svg>
    <svg class="ic" viewBox="0 0 16 16"><circle cx="7" cy="5" r="3.500" fill="#b7c3cd"/><path d="M1 15c0-6 9-6 10-3v3z" fill="#b7c3cd"/><rect x="6" y="10" width="10" height="6" fill="#fff" stroke="#aab"/></svg>
    <svg class="ic" viewBox="0 0 16 16"><path d="M1 3l4-2c1 2 5 2 6 0l4 2-1 4h-2v8H4V7H2z" fill="#1a78c8"/></svg>
    <svg class="ic" viewBox="0 0 16 16"><path d="M2 14l7-7c-1-3 2-6 5-5l-3 3 1 2 2 1 2-3c1 3-2 6-5 5l-7 6z" fill="#1a78c8"/></svg>
  </div>
  <svg class="ime-s"><use href="#slogo"/></svg>
</div>

<div class="net">
  <div class="net-c"><svg class="net-w"><use href="#wifi"/></svg></div>
  <div class="net-t">
    <div class="net-l"><svg class="net-i" viewBox="0 0 10 14"><path d="M3 14V4M1 11l2 3M7 0v11" stroke="#2ecc71" stroke-width="2"/><path d="M7 1v13M5 4l2-3 2 3" stroke="#f58a20" stroke-width="2" fill="none"/></svg><span>0.00K/s</span></div>
    <div class="net-l"><svg class="net-i" viewBox="0 0 10 14"><path d="M1 3h8v11H1z" fill="#2ecc71"/><path d="M2 0h2v3H2z" fill="#2ecc71"/></svg><span>0</span></div>
  </div>
</div>

<div class="dlg">
  <div class="dlg-t"><svg class="i"><use href="#app"/></svg><span>智能布置</span><svg class="i close"><use href="#x"/></svg></div>
  <div class="dlg-b">
    <div class="fs left">
      <span class="lg">布置方式选择</span>
      <label class="radio"><i class="rd"></i>双向布置</label>
      <label class="radio"><i class="rd"></i>双网双向布置</label>
      <label class="radio"><i class="rd sel"></i><span class="m">XY</span>向布置</label>
    </div>
    <div class="dright">
      <div class="fs rg">
        <span class="lg">底筋</span>
        <div class="fr"><span class="fl"><span class="m">X</span>方向</span><span class="dd"><svg class="dc"><use href="#dropc"/></svg></span></div>
        <div class="fr"><span class="fl"><span class="m">Y</span>方向</span><span class="dd"><svg class="dc"><use href="#dropc"/></svg></span></div>
      </div>
      <div class="fs rg second">
        <span class="lg">面筋</span>
        <div class="fr"><span class="fl"><span class="m">X</span>方向</span><span class="dd"><svg class="dc"><use href="#dropc"/></svg></span></div>
        <div class="fr"><span class="fl"><span class="m">Y</span>方向</span><span class="dd"><svg class="dc"><use href="#dropc"/></svg></span></div>
      </div>
      <div class="refrow">
        <label class="ck"><svg class="cbx" viewBox="0 0 13 13"><rect x=".5" y=".5" width="12" height="12" fill="#fff" stroke="#333"/><path d="M2.500 6.500l3 3 5-6.500" fill="none" stroke="#333" stroke-width="1.200"/></svg><span class="ckt">选择参照轴网</span></label>
        <span class="dd focus"><span class="ckt">轴网<span class="m">-1</span></span><svg class="dc"><use href="#dropc"/></svg></span>
      </div>
      <div class="btns"><button class="btn b1">确定</button><button class="btn b2">取消</button></div>
    </div>
  </div>
</div>

<svg class="scribble" viewBox="1226 490 124 66"><ellipse cx="1287" cy="523" rx="55" ry="26" fill="none" stroke="#f00" stroke-width="6.500" shape-rendering="crispEdges"/></svg>
</body>
</html>
```
FILE: styles.css
```css
* { box-sizing: border-box; }
html, body { margin: 0; padding: 0; }
body {
  width: 1366px; height: 768px; overflow: hidden; position: relative;
  background: #f0f0f0; color: #151515;
  font: 12px/16px "Noto Sans", "Noto Sans CJK SC", "Liberation Sans", sans-serif;
  display: flex; flex-direction: column;
}
.defs { position: absolute; width: 0; height: 0; }
.i { width: 16px; height: 16px; flex: none; display: block; }
.i.sm { width: 12px; height: 12px; margin-left: 6px; }
.i.pinx { margin-left: auto; }
.m { font-family: "Liberation Mono", monospace; font-size: 11px; letter-spacing: -1.200px; }
.mono { font-family: "Liberation Mono", monospace; font-size: 10px; }
.mla { margin-left: auto; }
.ml2 { margin-left: 2px; } .ml4 { margin-left: 4px; } .ml6 { margin-left: 6px; } .ml7 { margin-left: 7px; } .ml8 { margin-left: 8px; }

/* title + menu */
.titlebar { height: 23px; background: #fff; display: flex; align-items: center; color: #999; flex: none; }
.logo { margin-left: 2px; }
.title { margin-left: 5px; white-space: nowrap; letter-spacing: .3px; }
.winbtns { margin-left: auto; display: flex; padding-right: 19px; gap: 35px; }
.wb { width: 12px; height: 12px; }

.menubar { height: 31px; flex: none; display: flex; align-items: center; }
.menu { display: flex; align-items: center; height: 27px; padding-left: 7px; width: 1124px; background: #f3f3f3; }
.mi { margin-right: 11.150px; white-space: nowrap; color: #2a1a0a; }
.news { margin-left: 27px; color: #5a3000; white-space: nowrap; background: #f6f6f6; line-height: 27px; padding-right: 30px; }
.acct { margin-left: 2px; flex: 1; display: flex; align-items: center; height: 27px; padding-left: 4px; background: #f8f8f8; position: relative; }
.phone { margin-left: 4px; }
.acct .c { margin-left: 7px; }
.bean { margin-left: 8px; }
.bell { margin-left: 8px; }
.more { font: bold 13px/10px "Liberation Sans", sans-serif; color: #222; align-self: flex-start; margin-top: 2px; }
.acct .more { margin-left: 38px; }

/* rows */
.row { display: flex; flex: none; gap: 2px; }
.r1 { height: 27px; margin-bottom: 3px; padding-left: 2px; }
.main { display: flex; flex: none; height: 623px; }
.work { margin-left: 5px; width: 1196px; display: flex; flex-direction: column; }
.r2 { height: 26px; margin-bottom: 1px; padding-left: 2px; }
.r3 { height: 26px; margin-bottom: 3px; padding-left: 2px; }
.r4 { height: 27px; margin-bottom: 1px; padding-left: 2px; }
.r5 { height: 28px; margin-top: 2px; padding-left: 2px; }
.r3 .grp, .r4 .grp { padding-top: 2px; }
.grp { display: flex; align-items: center; background: linear-gradient(#fbfbfb, #f6f6f6); padding-left: 4px; position: relative; }
.more.mla { margin-right: 3px; }
.g11 { width: 149px; }
.g12 { width: 548px; }
.g13 { flex: 1; padding-left: 2px; }
.g21 { width: 788px; padding-left: 1px; }
.g31 { width: 637px; padding-left: 1px; }
.g31 .gp { margin-right: 2px; }
.g31 .t { gap: 3px; }
.g32 { width: 422px; padding-left: 1px; padding-right: 4px; }
.g32 .gp { margin-right: 5px; }
.g41 { width: 1159px; padding-left: 1px; }
.g42 { flex: 1; padding-left: 2px; }
.g51 { width: 207px; padding-left: 1px; }
.g52 { width: 677px; padding-left: 1px; }

.t { display: inline-flex; align-items: center; gap: 4px; margin-right: 8px; white-space: nowrap; }
.t.m0 { margin-right: 0; } .t.m2 { margin-right: 2px; } .t.m3 { margin-right: 3px; } .t.m4 { margin-right: 4px; }
.t.m5 { margin-right: 5px; } .t.m6 { margin-right: 6px; } .t.m7 { margin-right: 7px; }
.t.m10 { margin-right: 10px; }
.dis { color: #a8a8a8; }
.sigma { width: 10px; font: bold 14px/16px "Liberation Sans", sans-serif; color: #111; margin-right: 4px; }
.tm { margin-left: -2px; }
.c { width: 0; height: 0; border: 3.500px solid transparent; border-top: 4px solid #222; border-bottom: 0; margin-left: 2px; flex: none; display: block; }
.c.ml6 { margin-left: 6px; }
.cn { margin-left: 0; }
.cn2 { margin-left: -2px; }
.cd { border-top-color: #777; }
.cg { border-top-color: #aaa; }
.sep { width: 1px; height: 20px; background: #c8c8c8; margin: 0 6px; flex: none; display: block; }
.r2 .sep { margin: 0 5px 0 7px; }
.r3 .s4 { margin: 0 6px 0 0; }
.s1 { margin: 0 2px 0 5px; }
.s2 { margin: 0 2px 0 3px; }
.s3 { margin: 0 2px 0 7px; }
.s5 { margin: 0 7px 0 5px; }
.s6 { margin: 0 6px 0 0; }
.gp { width: 3px; height: 16px; margin: 0 4px 0 1px; flex: none; display: block; background: radial-gradient(circle, #999 1px, transparent 1.300px) 0 0 / 3px 4px; }
.cb { display: flex; align-items: center; height: 24px; background: #fff; margin-right: 3px; flex: none; }
.cbt { padding-left: 2px; flex: 1; white-space: nowrap; }
.cbb { width: 11px; height: 24px; background: #f3f3f3; display: flex; align-items: center; justify-content: center; }
.cbb .c { margin: 0; }
.w46 { width: 57px; } .w59 { width: 69px; } .w58 { width: 69px; } .w47 { width: 58px; }
.cb.last { margin-right: 5px; }
.cb2d { width: 62px; padding-left: 3px; margin-right: 4px; }
.cb2d .cbt { padding-left: 4px; }
.linecb { width: 55px; height: 21px; border: 1px solid #888; background: #fff; display: flex; align-items: center; justify-content: flex-end; padding-right: 4px; margin-right: 5px; flex: none; }
.cg2 { border-top-color: #666; margin: 0; }
.act { height: 24px; border: 1px solid #1f87d8; background: #e2eff9; padding: 0 2px 0 3px; }
.axy { width: 66px; padding: 0 0 0 4px; gap: 2px; }
.r5 .act { padding: 0 4px 0 2px; gap: 3px; }

/* sidebar */
.side { width: 165px; flex: none; display: flex; flex-direction: column; padding-left: 1px; }
.side-h { height: 15px; display: flex; align-items: center; border: 1px solid #999; border-left: 0; line-height: 13px; margin-left: -1px; padding-right: 3px; margin-bottom: 2px; background: #f7f7f7; white-space: nowrap; }
.sbtn { height: 22px; line-height: 22px; text-align: center; border: 1px solid #aaa; background: #f0f0f0; flex: none; font-size: 12px; }
.pane { height: 514px; border: 1px solid #999; border-top: 1px solid #ccc; background: #fff; margin: 1px 0 1px 1px; display: flex; flex-direction: column; flex: none; }
.pane-tools { height: 28px; display: flex; gap: 7px; padding: 3px 0 0 3px; align-items: flex-start; flex: none; }
.pane-body { display: flex; flex: 1; min-height: 0; padding-right: 2px; }
.tree { flex: 1; overflow: hidden; height: 483px; }
.n, .k { height: 16px; display: flex; align-items: center; white-space: nowrap; position: relative; }
.n { padding-left: 7px; }
.ch { width: 10px; height: 10px; flex: none; }
.d { width: 6px; border-top: 1px dotted #777; flex: none; display: block; }
.nt { margin-left: 5px; font-size: 12px; }
.kids { margin-left: 12px; border-left: 1px dotted #888; padding-left: 18px; }
.kl { border-left: 1px dotted #888; }
.k { padding-left: 11px; gap: 4px; }
.k::before { content: ""; position: absolute; left: 0; width: 11px; top: 8px; border-top: 1px dotted #888; }
.k:last-child::after { content: ""; position: absolute; left: -1px; top: 9px; height: 8px; width: 1px; background: #fff; }
.picked > span { background: #d9d9d9; margin-left: -5px; padding: 0 6px 0 5px; }
.picked { background: linear-gradient(90deg, transparent 8px, #f0f0f0 8px, #f0f0f0 26px, transparent 26px); }
.sbar { width: 15px; background: #f0f0f0; display: flex; flex-direction: column; align-items: center; flex: none; }
.sa { width: 10px; height: 10px; margin-top: 3px; flex: none; }
.sa.dn { margin-top: auto; margin-bottom: 5px; }
.thumb { width: 15px; height: 307px; background: #cdcdcd; margin-top: 3px; }

/* canvas */
.cad-wrap { height: 507px; flex: none; }
.cad { width: 1196px; height: 507px; display: block; }
.lbl text { font: 15px "Liberation Sans", sans-serif; fill: #c8c8c8; text-anchor: middle; }
.lbl text.lp { fill: #b06ab0; }
.lbl text.dim { font-size: 15px; letter-spacing: .5px; }
.ax { font: 14px "Liberation Sans", sans-serif; text-anchor: middle; }
.gy { fill: #0a9a0a; } .rx { fill: #e01010; }

/* bottom bar */
.lab { flex: none; color: #555; }
.spin { height: 21px; border: 1px solid #777; background: #f6f6f6; color: #888; display: flex; align-items: center; justify-content: flex-end; flex: none; position: relative; margin-left: 5px; padding-right: 17px; }
.rot + .spin { margin-left: 3px; }
.sb { position: absolute; right: 3px; top: 3px; width: 7px; height: 13px; background:
  linear-gradient(135deg, transparent 50%, #777 50%) 0 0 / 3.500px 4px no-repeat,
  linear-gradient(225deg, transparent 50%, #777 50%) 3.500px 0 / 3.500px 4px no-repeat,
  linear-gradient(45deg, transparent 50%, #777 50%) 0 9px / 3.500px 4px no-repeat,
  linear-gradient(315deg, transparent 50%, #777 50%) 3.500px 9px / 3.500px 4px no-repeat; }
.w57 { width: 57px; } .w67 { width: 67px; }
.chk { width: 12px; height: 12px; border: 1px solid #888; background: #f8f8f8; flex: none; display: block; }
.rot { margin-left: 8px; color: #222; margin-right: 2px; }

/* status */
.status { height: 22px; flex: none; display: flex; gap: 2px; padding: 2px 0 1px; }
.st { background: #f8f8f8; border: 1px solid #ddd; white-space: nowrap; display: flex; align-items: center; padding-left: 2px; flex: none; line-height: 16px; }
.w147 { width: 147px; } .w77 { width: 77px; } .w97 { width: 97px; } .w47n { width: 48px; } .w72 { width: 72px; padding-left: 3px; }
.grow { flex: 1; padding-left: 2px; }

/* taskbar */
.taskbar { height: 40px; flex: none; background: #04100f; display: flex; align-items: center; color: #eee; }
.tb-win { width: 48px; height: 40px; background: #000; display: flex; align-items: center; justify-content: center; }
.tb-search { width: 342px; height: 40px; background: #333; display: flex; align-items: center; color: #999; font-size: 13px; }
.cortana { width: 18px; height: 18px; border: 2.500px solid #ddd; border-radius: 50%; margin: 0 6px 0 12px; flex: none; display: block; }
.tbm { margin-right: 11px; }
.tb-cell { height: 40px; display: flex; align-items: center; justify-content: center; flex: none; position: relative; }
.c48 { width: 48px; } .c52 { width: 52px; } .c56 { width: 56px; } .c40 { width: 40px; } .c42 { width: 42px; } .c50 { width: 50px; }
.first { margin-left: 2px; }
.ti { width: 22px; height: 22px; }
.tv { width: 22px; height: 18px; }
.run-g::after, .run-e::after, .active::after { content: ""; position: absolute; bottom: 0; height: 2px; background: #76b9ed; }
.run-g::after { left: 9px; right: 2px; }
.run-e::after { left: 7px; right: 6px; }
.active { width: 43px; background: #2c383d; }
.active::after { left: 0; right: 0; }
.big { width: 24px; height: 24px; }
.tb-link { margin-left: 14px; font-size: 12px; color: #ddd; }
.tb-cpu { display: flex; flex-direction: column; align-items: center; margin-left: 21px; font-size: 12px; line-height: 18px; color: #ddd; }
.wg { color: #63b60d; width: 20px; height: 16px; margin-left: 21px; }
.tc { flex: none; width: 14px; height: 14px; }
.ch1 { margin-left: 12px; }
.tb { width: 18px; height: 16px; margin-left: 33px; }
.tw { width: 16px; height: 16px; margin-left: 9px; }
.ts { width: 16px; height: 16px; margin-left: 6px; }
.tk { width: 22px; height: 16px; margin-left: 9px; }
.tb-zh { margin-left: 9px; font-size: 14px; }
.sl { width: 16px; height: 16px; margin-left: 14px; }
.tb-clock { display: flex; flex-direction: column; align-items: center; margin-left: 15px; width: 62px; line-height: 18px; color: #eee; }
.tn { width: 16px; height: 16px; margin-left: 17px; }

/* floating windows */
.ime { position: absolute; left: 884px; top: 0; width: 207px; height: 28px; }
.ime-green { position: absolute; left: 125px; top: 0; width: 45px; height: 3px; background: #4cc764; border: 1px solid #999; border-top: 0; }
.ime-s { position: absolute; left: 0; top: 0; width: 30px; height: 29px; }
.ime-bar { position: absolute; left: 22px; top: 3px; width: 185px; height: 24px; background: #fff; border: 1px solid #b7cbdc; display: flex; align-items: center; padding-left: 10px; gap: 7px; color: #1a78c8; }
.ime-bar b { font-size: 14px; }
.ime-p { font-weight: bold; width: 13px; line-height: 10px; margin: -2px 0 0 3px; }
.ic { width: 16px; height: 16px; flex: none; }
.net { position: absolute; left: 1075px; top: 83px; width: 120px; height: 50px; border-radius: 25px; background: #fff; box-shadow: 0 3px 9px rgba(0,0,0,.4); border: 1px solid #ccc; border-bottom: 0; display: flex; align-items: center; padding-left: 5px; }
.net-c { width: 38px; height: 38px; border-radius: 50%; background: #2ecc71; color: #fff; display: flex; align-items: center; justify-content: center; flex: none; }
.net-w { width: 24px; height: 20px; }
.net-t { margin-left: 6px; display: flex; flex-direction: column; gap: 4px; color: #66727c; font-size: 11.500px; }
.net-l { display: flex; align-items: center; gap: 6px; }
.net-i { width: 9px; height: 13px; flex: none; }

.dlg { position: absolute; left: 897px; top: 227px; width: 413px; height: 371px; background: #f0f0f0; border: 1px solid #4a98e0; display: flex; flex-direction: column; }
.dlg-t { height: 25px; flex: none; background: #fff; display: flex; align-items: center; padding-left: 3px; gap: 5px; }
.close { margin: 0 7px 0 auto; }
.dlg-b { display: flex; padding-left: 13px; flex: 1; }
.fs { border: 1px solid #dcdcdc; position: relative; }
.lg { position: absolute; top: -9px; left: 7px; background: #f0f0f0; padding-right: 2px; line-height: 16px; white-space: nowrap; }
.rg .lg { top: -8px; }
.left { width: 121px; height: 274px; margin-top: 22px; padding: 43px 0 0 7px; display: flex; flex-direction: column; gap: 72px; }
.radio { display: flex; align-items: center; gap: 3px; height: 16px; white-space: nowrap; }
.rd { width: 13px; height: 13px; border-radius: 50%; border: 1px solid #444; background: #fff; flex: none; display: block; margin-top: -1px; }
.rd.sel { background: radial-gradient(circle, #333 3.500px, #fff 4px); }
.dright { margin-left: 6px; width: 252px; padding-top: 38px; display: flex; flex-direction: column; }
.rg { width: 248px; height: 72px; padding: 11px 0 0 15px; display: flex; flex-direction: column; gap: 8px; }
.second { margin-top: 42px; }
.fr { display: flex; align-items: center; height: 20px; }
.fl { width: 40px; flex: none; white-space: nowrap; padding-top: 2px; }
.dd { width: 180px; height: 20px; background: #fff; border: 1px solid #7a7a7a; display: flex; align-items: center; justify-content: flex-end; padding-right: 4px; flex: none; }
.dc { width: 10px; height: 10px; }
.refrow { margin-top: 45px; height: 20px; display: flex; align-items: center; margin-left: -1px; }
.ck { width: 109px; display: flex; align-items: center; gap: 3px; white-space: nowrap; flex: none; }
.ckt { padding-top: 1px; }
.cbx { width: 13px; height: 13px; flex: none; }
.dd.focus { width: 143px; background: #dee4ea; border-color: #86a0ba; justify-content: space-between; padding-left: 3px; }
.btns { margin-top: 18px; display: flex; gap: 21px; padding-left: 80px; }
.btn { height: 28px; background: #e1e1e1; border: 1px solid #adadad; font: 12px/16px "Noto Sans CJK SC", sans-serif; color: #151515; padding: 0; }
.b1 { width: 72px; } .b2 { width: 78px; }
.scribble { position: absolute; left: 1226px; top: 490px; width: 124px; height: 66px; }
```
